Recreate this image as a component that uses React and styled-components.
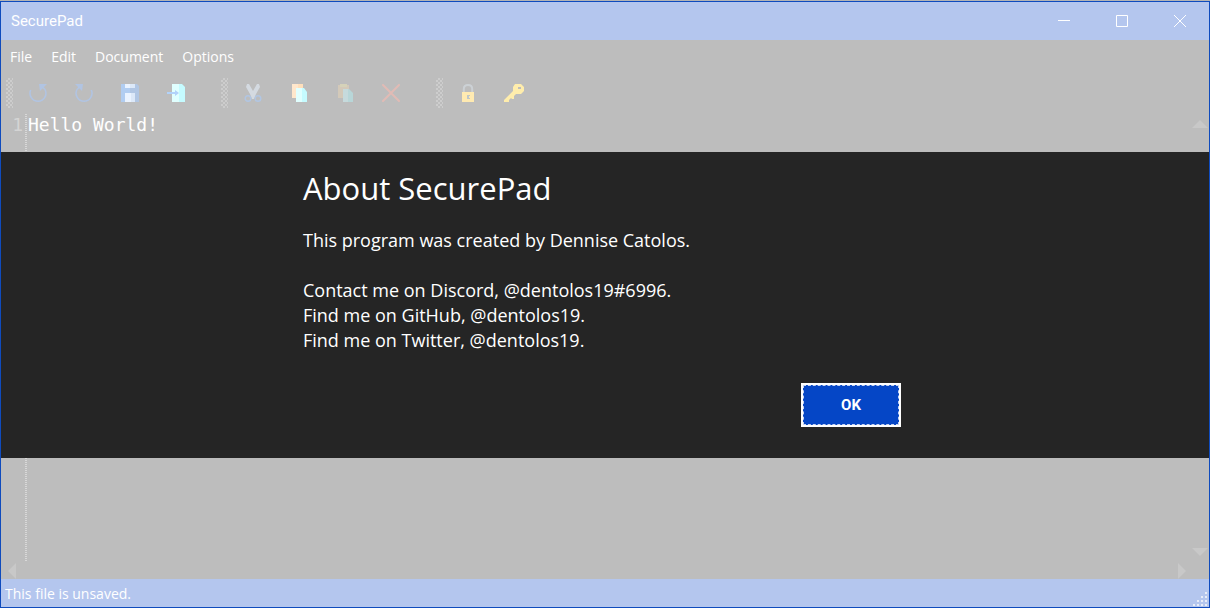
import React from "react";
import styled, { createGlobalStyle } from "styled-components";

const ui = `"Open Sans", "Noto Sans", sans-serif`;

const GlobalStyle = createGlobalStyle`
  * { box-sizing: border-box; }
  html, body { margin: 0; background: #b4b4b4; }
  button, input, textarea { font: inherit; color: inherit; }
  button { padding: 0; border: 0; background: none; }
`;

const Window = styled.div`
  position: relative;
  display: flex;
  flex-direction: column;
  height: calc(100vh - 1px);
  margin-top: 1px;
  border: 1px solid #0f4bbd;
  background: #bdbdbd;
  color: #fff;
  font: 15px/20px ${ui};
  overflow: hidden;
`;

const TitleBar = styled.header`
  display: flex;
  align-items: center;
  justify-content: space-between;
  height: 38px;
  flex: none;
  padding-left: 10px;
  background: #b4c6ee;
`;

const Title = styled.h1`
  margin: 0;
  font: 400 15px/20px Roboto, sans-serif;
`;

const Captions = styled.div`
  display: flex;
  height: 100%;
`;

const CaptionButton = styled.button`
  display: grid;
  place-items: center;
  width: 58px;
  height: 100%;
`;

const Menu = styled.nav`
  display: flex;
  flex: none;
  gap: 1px;
  height: 34px;
`;

const MenuItem = styled.button`
  padding: 0 9px;
  font-size: 14px;
`;

const Toolbar = styled.div`
  display: flex;
  flex: none;
  gap: 22px;
  height: 40px;
  padding: 0 0 2px 5px;
`;

const ToolGroup = styled.div`
  display: flex;
  align-items: center;
`;

const Grip = styled.span`
  width: 7px;
  height: 30px;
  margin-right: 2px;
  background:
    conic-gradient(#cdcdcd 25%, transparent 0) 0 0 / 4px 4px,
    conic-gradient(#cdcdcd 25%, transparent 0) 2px 2px / 4px 4px;
`;

const ToolButton = styled.button`
  display: grid;
  place-items: center;
  width: 46px;
  height: 30px;
`;

const Editor = styled.main`
  display: grid;
  flex: 1;
  min-height: 0;
  grid-template-columns: 26px 1fr 18px;
  grid-template-rows: 1fr 18px;
  font: 18px/22px "DejaVu Sans Mono", monospace;
`;

const Gutter = styled.div`
  padding-right: 4px;
  background: repeating-linear-gradient(#d8d8d8 0 1px, transparent 1px 2px) right / 2px 100% no-repeat;
  color: #d4d4d4;
  text-align: right;
`;

const Source = styled.textarea`
  width: 100%;
  height: 100%;
  padding: 0 1px;
  border: 0;
  outline: 0;
  resize: none;
  background: none;
  overflow: hidden;
`;

const VerticalScroll = styled.div`
  display: flex;
  flex-direction: column;
  justify-content: space-between;
  padding: 6px 0 5px;
`;

const HorizontalScroll = styled.div`
  grid-column: 1 / 3;
  display: flex;
  justify-content: space-between;
  padding: 2px 5px 0 7px;
`;

const ScrollButton = styled.button`
  display: grid;
  place-items: center;
  fill: #c8c8c8;
`;

const StatusBar = styled.footer`
  display: flex;
  flex: none;
  align-items: center;
  justify-content: space-between;
  height: 28px;
  padding-left: 4px;
  background: #b4c6ee;
  font-size: 14px;
`;

const Status = styled.span`
  padding-top: 2px;
`;

const SizeGrip = styled.svg`
  align-self: flex-end;
  fill: #e8edf8;
`;

const Overlay = styled.div`
  position: absolute;
  inset: 0;
  display: flex;
  align-items: center;
`;

const Dialog = styled.section`
  display: grid;
  grid-template-columns: 1fr 2fr 1fr;
  width: 100%;
  padding: 14px 0 31px;
  background: #252525;
`;

const DialogBody = styled.div`
  grid-column: 2;
  display: flex;
  flex-direction: column;
`;

const DialogTitle = styled.h2`
  margin: 0 0 18px;
  font: 400 31px/44px ${ui};
`;

const DialogText = styled.p`
  margin: 0;
  font-size: 18px;
  line-height: 25px;
  white-space: pre-line;
`;

const OkButton = styled.button`
  align-self: flex-end;
  width: 100px;
  height: 44px;
  margin: 30px 6px 0 0;
  border: 2px solid #fff;
  outline: 1px dashed #c4d3f2;
  outline-offset: -3px;
  background: #0546c6;
  font: 700 15px/20px Roboto, sans-serif;
`;

const Undo = () => (
  <svg width="18" height="18" viewBox="0 0 18 18" fill="none">
    <path d="M1.7 6A8 8 0 0 0 9 17.2A8 8 0 0 0 16 5.5L13.5 3" stroke="#b1c4e2" strokeWidth="1.6" />
    <path d="M10 0H18L11 7Z" fill="#b1c4e2" />
  </svg>
);
const Redo = () => (
  <svg width="18" height="18" viewBox="0 0 18 18" fill="none">
    <path d="M16.3 6A8 8 0 0 1 9 17.2A8 8 0 0 1 2 5.5L4.5 3" stroke="#b1c4e2" strokeWidth="1.6" />
    <path d="M8 0H0L7 7Z" fill="#b1c4e2" />
  </svg>
);
const Save = () => (
  <svg width="18" height="18" viewBox="0 0 18 18">
    <path d="M0 0H9V18H0Z" fill="#b1cdf1" />
    <path d="M9 0H16L18 2V18H9Z" fill="#b1c6e3" />
    <path d="M4 0H9V4H4ZM4 9H10V18H4Z" fill="#eaf3ff" />
    <path d="M9 0H14V4H9ZM10 9H14V18H10Z" fill="#dce8f8" />
  </svg>
);
const Import = () => (
  <svg width="18" height="18" viewBox="0 0 18 18">
    <path d="M5 0H12V18H5Z" fill="#e0ffff" />
    <path d="M12 0H15L18 3V18H12Z" fill="#c5fbff" />
    <path d="M0 8H8V6L12 9L8 12V10H0Z" fill="#b1d2fa" />
  </svg>
);
const Cut = () => (
  <svg width="18" height="18" viewBox="0 0 18 18">
    <path d="M3 0L5 0L9 7L13 0L15 0L16 3L12 10L10 15H8L6 10L2 3Z" fill="#d4dae1" />
    <g fill="none" stroke="#b1c6e3" strokeWidth="1.4">
      <circle cx="4" cy="14.5" r="2.8" />
      <circle cx="14" cy="14.5" r="2.8" />
    </g>
  </svg>
);
const Copy = () => (
  <svg width="18" height="18" viewBox="0 0 18 18">
    <path d="M2 0H8V14H2Z" fill="#ffe7cc" />
    <path d="M8 0H13V14H8Z" fill="#ffdfbb" />
    <path d="M6 4H12V18H6Z" fill="#e0ffff" />
    <path d="M12 4H14L17 8V18H12Z" fill="#c5fbff" />
  </svg>
);
const Paste = () => (
  <svg width="18" height="18" viewBox="0 0 18 18">
    <path d="M2 1H4L5 0H10L11 1H13V14H2Z" fill="#d3c9b9" />
    <path d="M4 0H11V3H4Z" fill="#d5d2b9" />
    <path d="M7 5H12V18H7Z" fill="#c6dadc" />
    <path d="M12 5H13L17 9V18H12Z" fill="#b8d6d8" />
  </svg>
);
const Delete = () => (
  <svg width="18" height="18" viewBox="0 0 18 18">
    <path d="M1 1L17 17M17 1L1 17" stroke="#e1bbb5" strokeWidth="2" strokeLinecap="round" />
  </svg>
);
const Lock = () => (
  <svg width="18" height="18" viewBox="0 0 18 18">
    <path d="M4.8 9V5Q4.8 1 9 1Q13.2 1 13.2 5V9" fill="none" stroke="#ccd1d5" strokeWidth="2" />
    <path d="M3 8H15V18H3Z" fill="#ffeab1" />
    <path d="M8 11H11V15H8Z" fill="#bfc7c8" />
    <path d="M10 12H11V14H10Z" fill="#ffeab1" />
  </svg>
);
const Key = () => (
  <svg width="20" height="18" viewBox="0 0 20 18">
    <path
      fillRule="evenodd"
      d="M11 0H17L20 3V7L17 10H12L10 12V15H8L7 14L5 16V18H0V16L9 7V3ZM14 3V5H17V3Z"
      fill="#ffedac"
    />
  </svg>
);

const toolGroups = [
  [
    ["Undo", Undo],
    ["Redo", Redo],
    ["Save", Save],
    ["Import", Import],
  ],
  [
    ["Cut", Cut],
    ["Copy", Copy],
    ["Paste", Paste],
    ["Delete", Delete],
  ],
  [
    ["Lock", Lock],
    ["Key", Key],
  ],
];

const captionIcons = [
  ["Minimize", "M0 5.5H12"],
  ["Maximize", "M.5 .5H11.5V11.5H.5Z"],
  ["Close", "M0 0L12 12M12 0L0 12"],
];

const Arrow = ({ w, h, d }) => (
  <svg width={w} height={h} viewBox={`0 0 ${w} ${h}`}>
    <path d={d} />
  </svg>
);

export default function App() {
  return (
    <>
      <GlobalStyle />
      <Window>
        <TitleBar>
          <Title>SecurePad</Title>
          <Captions>
            {captionIcons.map(([name, d]) => (
              <CaptionButton key={name} aria-label={name}>
                <svg width="12" height="12" viewBox="0 0 12 12" fill="none" stroke="#fff">
                  <path d={d} />
                </svg>
              </CaptionButton>
            ))}
          </Captions>
        </TitleBar>
        <Menu>
          {["File", "Edit", "Document", "Options"].map((name) => (
            <MenuItem key={name}>{name}</MenuItem>
          ))}
        </Menu>
        <Toolbar>
          {toolGroups.map((group, i) => (
            <ToolGroup key={i}>
              <Grip />
              {group.map(([name, Icon]) => (
                <ToolButton key={name} aria-label={name}>
                  <Icon />
                </ToolButton>
              ))}
            </ToolGroup>
          ))}
        </Toolbar>
        <Editor>
          <Gutter>1</Gutter>
          <Source aria-label="Document text" spellCheck={false} defaultValue="Hello World!" />
          <VerticalScroll>
            <ScrollButton aria-label="Scroll up">
              <Arrow w={16} h={8} d="M8 0L16 8H0Z" />
            </ScrollButton>
            <ScrollButton aria-label="Scroll down">
              <Arrow w={16} h={8} d="M0 0H16L8 8Z" />
            </ScrollButton>
          </VerticalScroll>
          <HorizontalScroll>
            <ScrollButton aria-label="Scroll left">
              <Arrow w={8} h={16} d="M8 0V16L0 8Z" />
            </ScrollButton>
            <ScrollButton aria-label="Scroll right">
              <Arrow w={8} h={16} d="M0 0V16L8 8Z" />
            </ScrollButton>
          </HorizontalScroll>
        </Editor>
        <StatusBar>
          <Status>This file is unsaved.</Status>
          <SizeGrip width="16" height="16" viewBox="0 0 16 16">
            <path d="M12 1h2v2h-2zM8 5h2v2h-2zM12 5h2v2h-2zM4 9h2v2h-2zM8 9h2v2h-2zM12 9h2v2h-2zM0 13h2v2h-2zM4 13h2v2h-2zM8 13h2v2h-2zM12 13h2v2h-2z" />
          </SizeGrip>
        </StatusBar>
        <Overlay>
          <Dialog role="dialog" aria-labelledby="about-title">
            <DialogBody>
              <DialogTitle id="about-title">About SecurePad</DialogTitle>
              <DialogText>
                {`This program was created by Dennise Catolos.

                Contact me on Discord, @dentolos19#6996.
                Find me on GitHub, @dentolos19.
                Find me on Twitter, @dentolos19.`}
              </DialogText>
              <OkButton>OK</OkButton>
            </DialogBody>
          </Dialog>
        </Overlay>
      </Window>
    </>
  );
}
